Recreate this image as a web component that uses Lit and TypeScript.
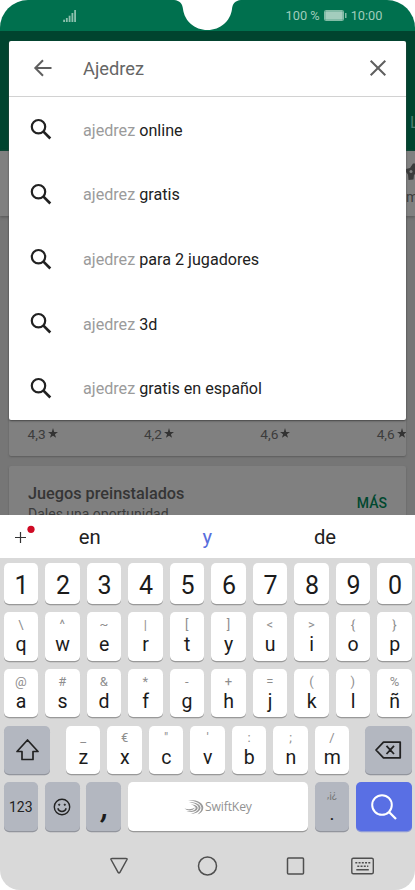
import { LitElement, html, css, svg } from "lit";
import { customElement, property } from "lit/decorators.js";

const ROW_DIGITS = ["1", "2", "3", "4", "5", "6", "7", "8", "9", "0"];
const ROW_TOP = [["q", "\\"], ["w", "^"], ["e", "~"], ["r", "|"], ["t", "["], ["y", "]"], ["u", "<"], ["i", ">"], ["o", "{"], ["p", "}"]];
const ROW_HOME = [["a", "@"], ["s", "#"], ["d", "&"], ["f", "*"], ["g", "-"], ["h", "+"], ["j", "="], ["k", "("], ["l", ")"], ["ñ", "%"]];
const ROW_BOTTOM = [["z", "_"], ["x", "€"], ["c", "\""], ["v", "'"], ["b", ":"], ["n", ";"], ["m", "/"]];

@customElement("status-bar")
export class StatusBar extends LitElement {
  static styles = css`
    :host { display: block; position: relative; height: 31px; background: #00704e; color: #9fcdbb; }
    .bar { display: flex; height: 31px; align-items: center; padding: 0 32.500px 0 62px; font-size: 12.800px; }
    .signal { width: 16px; height: 14px; display: block; }
    .percent { margin-left: auto; margin-right: 4px; }
    .battery { width: 23px; height: 11px; margin-right: 4px; display: block; }
    .notch { position: absolute; left: 174px; top: 0; width: 67px; height: 31px; }
  `;
  render() {
    return html`
      <div class="bar">
        <svg class="signal" viewBox="0 0 16 14" fill="#8cc0ad">
          <rect x="1.2" y="10.700" width="1.800" height="2.300" /><rect x="3.900" y="9" width="1.800" height="4" />
          <rect x="6.700" y="6.700" width="1.800" height="6.300" /><rect x="9.500" y="4" width="1.800" height="9" />
          <rect x="12.200" y="1" width="1.800" height="12" />
        </svg>
        <span class="percent">100 %</span>
        <svg class="battery" viewBox="0 0 23 11">
          <rect x=".5" y=".5" width="19" height="10" rx="1" fill="none" stroke="#83bda7" />
          <rect x="1.200" y="1.200" width="17.600" height="8.600" fill="#a3cdbd" />
          <rect x="21" y="3" width="1.500" height="5" fill="#83bda7" />
        </svg>
        <span>10:00</span>
      </div>
      <svg class="notch" viewBox="0 0 67 31">
        <path fill="#fff" d="M0 0C6 .6 8.500 4 9 9C10.500 21 20.500 30 33.500 30S56.500 21 58 9C58.500 4 61 .6 67 0Z" />
      </svg>`;
  }
}

@customElement("store-page")
export class StorePage extends LitElement {
  static styles = css`
    :host { display: flex; flex-direction: column; height: 484px; background: #767676; overflow: hidden; color: #3c3c3c; }
    .header { flex: none; height: 120px; box-sizing: border-box; padding: 83px 0 0 410px; background: #00442f; color: #4f7f70; font-size: 16px; line-height: 18px; white-space: nowrap; overflow: hidden; }
    .tabs { flex: none; height: 65px; background: #808080; box-shadow: 0 1px 3px #555; padding-left: 405px; font-size: 14px; overflow: hidden; box-sizing: border-box; white-space: nowrap; }
    .tabs svg { display: block; width: 20px; height: 20px; margin-top: 11px; }
    .tabs div { line-height: 16px; margin-top: 7px; padding-left: 1px; }
    .card { margin: 0 9px; background: #808080; border-radius: 2px; box-shadow: 0 1px 2px #5c5c5c; }
    .ratings { flex: none; height: 240px; display: flex; align-items: flex-end; box-sizing: border-box; padding: 0 0 13.500px 18.500px; overflow: hidden; }
    .rating { flex: none; width: 116.400px; display: flex; align-items: center; font-size: 13.700px; line-height: 18px; gap: 2px; }
    .rating svg { width: 10px; height: 10px; margin-top: -1px; }
    .games { flex: none; height: 90px; margin-top: 10px; display: flex; justify-content: space-between; box-sizing: border-box; padding: 17px 19px 0; }
    .title { font-size: 16.250px; line-height: 22px; font-weight: 500; color: #353535; }
    .sub { font-size: 14px; line-height: 18px; margin-top: 0; }
    .more { font-size: 14px; font-weight: 500; color: #00482f; line-height: 20px; padding-top: 10px; }
  `;
  render() {
    return html`
      <div class="header">L</div>
      <div class="tabs">
        <svg viewBox="0 0 20 20"><path fill="#3b3b3b" d="M1 7L5 6L8 1.500L18 1V12L9 12.500L8.500 17.500L3.500 18L3 12.500L1 10Z" /><circle cx="6" cy="9.500" r="1.500" fill="#808080" /></svg>
        <div>m</div>
      </div>
      <div class="card ratings">
        ${["4,3", "4,2", "4,6", "4,6"].map((r) => html`<div class="rating">${r}
          <svg viewBox="0 0 24 24"><path fill="#333" d="M12 18.500l7.400 5-2.800-8.700L24 9.300h-9.100L12 0 9.100 9.300H0l7.400 5.500-2.800 8.700z" /></svg></div>`)}
      </div>
      <div class="card games">
        <div><div class="title">Juegos preinstalados</div><div class="sub">Dales una oportunidad</div></div>
        <div class="more">MÁS</div>
      </div>`;
  }
}

@customElement("search-panel")
export class SearchPanel extends LitElement {
  static styles = css`
    :host { display: block; background: #fff; border-radius: 2px; box-shadow: 0 1px 2px #444; height: 379.500px; }
    .field { display: flex; align-items: center; height: 56px; box-sizing: border-box; border-bottom: 1px solid #d2d2d2; padding: 0 17px 0 22px; color: #666; font-size: 18.300px; }
    .arrow { width: 24px; height: 24px; margin-right: 28px; }
    .close { width: 24px; height: 24px; margin-left: auto; margin-right: -1px; }
    .item { display: flex; align-items: center; height: 64.700px; padding-left: 20px; font-size: 16.150px; color: #212121; white-space: pre; }
    .item:nth-child(2) { margin-top: 1.300px; }
    .item svg { width: 24px; height: 24px; margin-right: 30px; }
    .typed { color: #9b9b9b; }
  `;
  render() {
    return html`
      <div class="field">
        <svg class="arrow" viewBox="0 0 24 24" fill="none" stroke="#5f5f5f" stroke-width="2"><path d="M20.500 12H4.500M12 4.200L4.300 12L12 19.800" /></svg>
        <span>Ajedrez</span>
        <svg class="close" viewBox="0 0 24 24" fill="none" stroke="#5f5f5f" stroke-width="2"><path d="M4.700 4.700L19.300 19.300M19.300 4.700L4.700 19.300" /></svg>
      </div>
      ${["online", "gratis", "para 2 jugadores", "3d", "gratis en español"].map((t) => html`
        <div class="item"><svg viewBox="0 0 24 24" fill="none" stroke="#212121"><circle cx="9.500" cy="8.700" r="6.700" stroke-width="2.200" /><path d="M14.200 13.400L21.300 20.500" stroke-width="2.700" /></svg><span><span class="typed">ajedrez </span>${t}</span></div>`)}`;
  }
}

@customElement("key-cap")
export class KeyCap extends LitElement {
  @property() label = "";
  @property() hint = "";
  static styles = css`
    :host { display: flex; flex-direction: column; align-items: center; justify-content: center; box-sizing: border-box; background: #fff; border-radius: 5px; box-shadow: 0 1.300px 0 #999; color: #1b1b1b; height: 48.500px; min-width: 0; }
    :host(.digit) { height: 40.500px; }
    :host(.tool) { background: #b3b7c0; box-shadow: 0 1.300px 0 #92959d; }
    :host(.search) { background: #596fe4; box-shadow: 0 1.300px 0 #8f9bd8; }
    .digit { font-size: 25px; line-height: 30px; padding: 4px 0 0 1.500px; }
    .hint { height: 17px; font-size: 13px; line-height: 17px; color: #8e8e8e; }
    .letter { font-size: 19.500px; line-height: 24px; height: 24px; padding-left: .5px; }
  `;
  render() {
    if (!this.label) return html`<slot></slot>`;
    return this.hint
      ? html`<span class="hint">${this.hint}</span><span class="letter">${this.label}</span>`
      : html`<span class="digit">${this.label}</span>`;
  }
}

@customElement("soft-keyboard")
export class SoftKeyboard extends LitElement {
  static styles = css`
    :host { display: flex; flex-direction: column; height: 375px; background: #d9d9d9; }
    .suggest { display: flex; flex: none; height: 43px; background: #fff; align-items: center; font-size: 20.300px; color: #212121; line-height: 43px; }
    .plus { width: 31px; height: 43px; padding-left: 10px; }
    .word { width: 117.600px; text-align: center; padding-top: 2px; box-sizing: border-box; }
    .first { margin-left: -10px; }
    .mid { color: #586edc; }
    .rows { display: grid; gap: 8.300px; padding: 5.300px 3.300px 0 3.500px; }
    .row { display: grid; grid-template-columns: repeat(10, 1fr); gap: 6.900px; }
    .row.bottom { display: flex; justify-content: space-between; gap: 0; }
    .letters { display: grid; grid-template-columns: repeat(7, 34.600px); gap: 6.900px; }
    .wide { width: 46.700px; }
    .row.last { grid-template-columns: 34.600px 34.600px 34.600px 1fr 34.600px 55.500px; }
    .num { font-size: 14px; color: #222; }
    .comma { font-size: 29px; font-weight: 700; font-style: italic; line-height: 30px; padding: 2px 0 0 3px; }
    .brand { display: flex; align-items: center; color: #929292; font: 400 12.200px "Open Sans", sans-serif; letter-spacing: -.15px; gap: 1px; }
    .alt { font-size: 11px; line-height: 14px; color: #777; }
    .dot { font-size: 19px; line-height: 24px; }
    svg { display: block; }
    .nav { flex: 1; display: flex; align-items: center; padding: 15px 40px 0 109px; gap: 64px; }
    .nav svg { flex: none; width: 24px; height: 24px; overflow: visible; }
    .nav .kb { margin-left: -23px; }
  `;
  keys(row: string[][]) {
    return row.map(([l, h]) => html`<key-cap label=${l} hint=${h}></key-cap>`);
  }
  render() {
    return html`
      <div class="suggest">
        <svg class="plus" viewBox="0 0 31 43"><path d="M5 22.500h11M10.500 17v11" stroke="#333" stroke-width="1.200" /><circle cx="21" cy="14.300" r="3.600" fill="#cf0a24" /></svg>
        <span class="word first">en</span><span class="word mid">y</span><span class="word">de</span>
      </div>
      <div class="rows">
        <div class="row">${ROW_DIGITS.map((d) => html`<key-cap class="digit" label=${d}></key-cap>`)}</div>
        <div class="row">${this.keys(ROW_TOP)}</div>
        <div class="row">${this.keys(ROW_HOME)}</div>
        <div class="row bottom">
          <key-cap class="tool wide"><svg width="24" height="24" viewBox="0 0 24 24" fill="none" stroke="#222" stroke-width="1.700" stroke-linejoin="round"><path d="M12.500 2L23 13.500H18V21.500H7V13.500H2Z" /></svg></key-cap>
          <div class="letters">${this.keys(ROW_BOTTOM)}</div>
          <key-cap class="tool wide"><svg width="28" height="20" viewBox="0 0 28 20" fill="none" stroke="#222" stroke-width="1.800" stroke-linejoin="round"><path d="M9.500 2.200H26.200V17.800H9.500L2 10ZM12.500 5.800L20 14M20 5.800L12.500 14" /></svg></key-cap>
        </div>
        <div class="row last">
          <key-cap class="tool"><span class="num">123</span></key-cap>
          <key-cap class="tool"><svg width="18" height="18" viewBox="0 0 18 18" fill="none" stroke="#222" stroke-width="1.400"><circle cx="9" cy="9" r="7.700" /><path d="M4.800 10.200C6 14.500 12 14.500 13.200 10.200" /><circle cx="6.200" cy="6.700" r=".7" fill="#222" stroke-width=".8" /><circle cx="11.800" cy="6.700" r=".7" fill="#222" stroke-width=".8" /></svg></key-cap>
          <key-cap class="tool"><span class="comma">,</span></key-cap>
          <key-cap><span class="brand"><svg width="20" height="16" viewBox="0 0 20 16" fill="#9a9a9a"><path d="M4 1C13 .3 19.300 4 19.300 8.500C19.300 12 16.500 14.500 13.500 15.500C16.500 12.800 17.700 11 17.400 8.500C16.800 4.500 11.500 1.800 4 1Z" /><path d="M5 3C12 3 16.500 5.500 16.500 8.700C16.500 12 12.500 14.700 7 14.800C11.500 13.500 14.600 11.500 14.600 8.800C14.500 6 10.500 4 5 3Z" /><path d="M6.500 5.200C11 5.500 13.700 7 13.700 8.900C13.500 12 8 13.800 2.500 12.700C8 12.500 11.500 11 11.700 9C11.700 7.500 9.700 6.200 6.500 5.200Z" /><path d="M.5 9.500C4.500 10.700 8 10.300 11 8.500C9 12 4 12.300 .5 9.500Z" /></svg>SwiftKey</span></key-cap>
          <key-cap class="tool"><span class="alt">,¡¿</span><span class="dot">.</span></key-cap>
          <key-cap class="search"><svg width="28" height="28" viewBox="0 0 28 28" fill="none" stroke="#fff" stroke-width="2"><circle cx="12" cy="12" r="9.800" /><path d="M19 19L26 26" stroke-width="2.300" /></svg></key-cap>
        </div>
      </div>
      <div class="nav">
        ${[svg`<path d="M2 3.500Q1.500 2.500 3 2.500H17Q18.500 2.500 18 3.500L10.800 16.500Q10 17.500 9.200 16.500Z" />`,
          svg`<circle cx="10.500" cy="10" r="9" />`,
          svg`<rect x="2.500" y="2" width="16" height="16" rx="1" />`].map((g) => html`<svg viewBox="0 0 24 24" fill="none" stroke="#4f4f4f" stroke-width="1.500">${g}</svg>`)}
        <svg class="kb" viewBox="0 0 24 24" fill="none" stroke="#4f4f4f" stroke-width="1.400"><rect x="1.800" y="2.200" width="21.500" height="15.600" rx="1.500" /><path d="M5.300 6.700H20.300M7.300 10.200H18.300" stroke-dasharray="2 1.250" /><path d="M6.300 13.700H18.800" /></svg>
      </div>`;
  }
}

@customElement("app-root")
export class AppRoot extends LitElement {
  static styles = css`
    :host { display: block; position: relative; width: 415px; height: 890px; overflow: hidden; background: #fff; font-family: Roboto, sans-serif; }
    .screen { height: 890px; border-radius: 28px 28px 20px 20px; overflow: hidden; }
    search-panel { position: absolute; left: 9px; top: 40.500px; width: 397px; }
  `;
  render() {
    return html`<div class="screen">
      <status-bar></status-bar>
      <store-page></store-page>
      <soft-keyboard></soft-keyboard>
      <search-panel></search-panel>
    </div>`;
  }
}
